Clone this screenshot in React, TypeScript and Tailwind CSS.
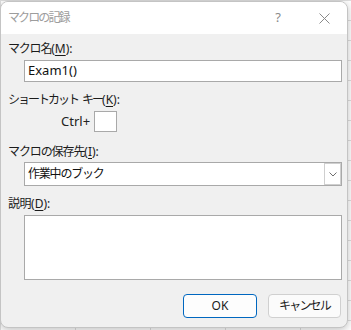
import type { ReactNode } from "react";

const font = 'font-["Noto_Sans","Noto_Sans_CJK_JP",sans-serif]';

function Label({ text, keyChar, tracking }: { text: ReactNode; keyChar: string; tracking: string }) {
  return (
    <div className="ml-[7px] h-[16px] text-[12px] leading-[16px] text-[#1b1b1b]">
      <span className={tracking}>{text}</span>(
      <span className="underline underline-offset-2">{keyChar}</span>):
    </div>
  );
}

export default function App() {
  return (
    <div
      className={`${font} h-[330px] w-[351px] overflow-hidden bg-white bg-[linear-gradient(#dedede_1px,transparent_1px),linear-gradient(90deg,#dedede_1px,transparent_1px)] bg-[size:75px_20px] pt-[1px]`}
    >
      <div className="flex h-[327px] w-[348px] flex-col overflow-hidden rounded-[8px] border border-[#c4c4c4] bg-[#f0f0f0] shadow-[0_2px_8px_rgba(0,0,0,0.25)]">
        <div className="flex h-[32px] shrink-0 items-center bg-white">
          <span className="ml-[7px] text-[12px] tracking-[-1.9px] text-[#9d9d9d]">マクロの記録</span>
          <span className="ml-auto text-[13px] text-[#8a8a8a]">?</span>
          <svg className="mr-[17px] ml-[38px]" width="11" height="11" viewBox="0 0 11 11">
            <path d="M0.5 0.5L10.5 10.5M10.5 0.5L0.5 10.5" stroke="#8a8a8a" strokeWidth="1" />
          </svg>
        </div>

        <div className="flex flex-col">
          <div className="mt-[7px]">
            <Label text="マクロ名" keyChar="M" tracking="tracking-[-1.2px]" />
          </div>
          <div className="mt-[3px] ml-[23px] mr-[5px] flex h-[22px] items-center border border-[#a9a9a9] bg-white pl-[3px] text-[13px] text-[#111]">
            Exam1()
          </div>

          <div className="mt-[10px]">
            <Label
              text={
                <>
                  ショートカット<span className="ml-[4px]">キー</span>
                </>
              }
              keyChar="K"
              tracking="tracking-[-2px]"
            />
          </div>
          <div className="mt-[3px] flex h-[21px] items-center">
            <span className="ml-[60px] text-[13px] text-[#222]">Ctrl+</span>
            <div className="ml-[4px] h-[21px] w-[23px] border border-[#a9a9a9] bg-white" />
          </div>

          <div className="mt-[12px]">
            <Label text="マクロの保存先" keyChar="I" tracking="tracking-[-1.1px]" />
          </div>
          <div className="mt-[2px] ml-[23px] mr-[5px] flex h-[24px] items-center border border-[#a9a9a9] bg-white pl-[3px] text-[12px] text-[#111]">
            <span className="tracking-[-1.2px]">作業中のブック</span>
            <div className="ml-auto flex h-[22px] w-[17px] items-center justify-center border border-[#cfcfcf] bg-white">
              <svg width="8" height="5" viewBox="0 0 8 5">
                <path d="M0.5 0.5L4 4L7.5 0.5" fill="none" stroke="#6e6e6e" strokeWidth="1" />
              </svg>
            </div>
          </div>

          <div className="mt-[10px]">
            <Label text="説明" keyChar="D" tracking="tracking-[-0.5px]" />
          </div>
          <div className="mt-[3px] ml-[23px] mr-[5px] h-[65px] border border-[#a9a9a9] bg-white" />

          <div className="mt-[14px] mr-[6px] flex justify-end gap-[11px]">
            <button className="flex h-[24px] w-[74px] items-center justify-center rounded-[4px] border border-[#0067c0] bg-[#fdfdfd] text-[12px] text-[#1b1b1b]">
              OK
            </button>
            <button className="flex h-[24px] w-[73px] items-center justify-center rounded-[4px] border border-[#d0d0d0] bg-[#fbfbfb] text-[12px] tracking-[-1.8px] text-[#1b1b1b]">
              キャンセル
            </button>
          </div>
        </div>
      </div>
    </div>
  );
}
